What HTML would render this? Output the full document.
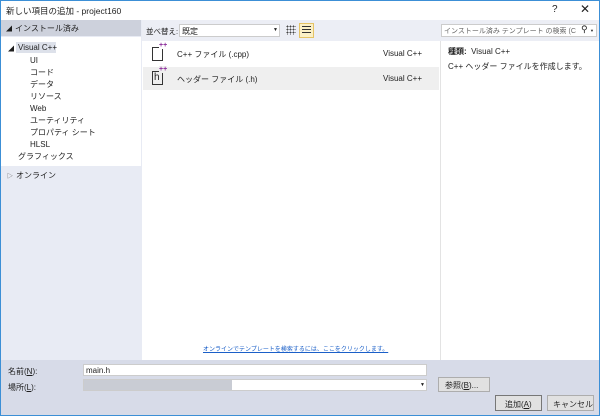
<!DOCTYPE html>
<html><head><meta charset="utf-8"><style>
*{margin:0;padding:0;box-sizing:border-box}
body{width:600px;height:416px;overflow:hidden;font-family:"Liberation Sans","Noto Sans CJK JP",sans-serif;font-size:8px;color:#1e1e1e;background:#fff;position:relative}
.a{position:absolute;white-space:nowrap}
#win{position:absolute;left:0;top:0;width:600px;height:416px;border:1px solid #3c8fd6;}
</style></head><body>
<div class="a" style="left:0;top:0;width:600px;height:20px;background:#fff"></div>
<div class="a" style="left:6px;top:5px;font-size:8.5px">新しい項目の追加 - project160</div>
<div class="a" style="left:552px;top:4px;font-size:10px">?</div>
<div class="a" style="left:580px;top:2px;font-size:12px">✕</div>
<!-- left panel -->
<div class="a" style="left:0;top:20px;width:142px;height:340px;background:#e8ebf4"></div>
<div class="a" style="left:0;top:20px;width:141px;height:16px;background:#cdd1dc"></div>
<div class="a" style="left:6px;top:24px;font-size:6px">◢</div>
<div class="a" style="left:15px;top:23px">インストール済み</div>
<div class="a" style="left:0;top:37px;width:141px;height:129px;background:#fff"></div>
<div class="a" style="left:8px;top:44px;font-size:6px">◢</div>
<div class="a" style="left:16px;top:42px;width:40px;height:11px;background:#dde1ea"></div>
<div class="a" style="left:18px;top:43px">Visual C++</div>
<div class="a" style="left:30px;top:55px;line-height:12px">UI<br>コード<br>データ<br>リソース<br>Web<br>ユーティリティ<br>プロパティ シート<br>HLSL</div>
<div class="a" style="left:18px;top:151px">グラフィックス</div>
<div class="a" style="left:7px;top:171px;font-size:6px;color:#555">▷</div>
<div class="a" style="left:16px;top:170px">オンライン</div>
<!-- toolbar -->
<div class="a" style="left:142px;top:20px;width:458px;height:21px;background:#eceef5"></div>
<div class="a" style="left:146px;top:26px;font-size:7.5px">並べ替え:</div>
<div class="a" style="left:179px;top:24px;width:101px;height:13px;background:#fff;border:1px solid #ccc"></div>
<div class="a" style="left:182px;top:26px">既定</div>
<div class="a" style="left:273px;top:27px;font-size:5px">▼</div>
<div class="a" style="left:286px;top:25px;width:10px;height:10px;background:radial-gradient(circle,#444 0.8px,transparent 1px) 0 0/3px 3px"></div>
<div class="a" style="left:299px;top:23px;width:15px;height:15px;background:#fbf0c6;border:1px solid #e5c365"></div>
<div class="a" style="left:302px;top:26px;width:9px;height:9px;background:repeating-linear-gradient(#333 0 1.2px,transparent 1.2px 3px)"></div>
<div class="a" style="left:441px;top:24px;width:156px;height:13px;background:#fff;border:1px solid #ccc;overflow:hidden"></div>
<div class="a" style="left:444px;top:26px;width:132px;overflow:hidden;color:#666;font-size:7px">インストール済み テンプレート の検索 (Ctrl+E</div>
<div class="a" style="left:581px;top:24px;font-size:9px;transform:scaleX(-1)">⚲</div>
<div class="a" style="left:590px;top:28px;font-size:4px">▼</div>
<!-- list -->
<div class="a" style="left:143px;top:41px;width:297px;height:319px;background:#fff"></div>
<div class="a" style="left:143px;top:67px;width:296px;height:23px;background:#efefef"></div>
<div class="a" style="left:152px;top:47px;width:11px;height:14px;border:1.5px solid #333"></div>
<div class="a" style="left:159px;top:42px;color:#8b2c9a;font-size:7px;font-weight:bold;background:#fff">++</div>
<div class="a" style="left:152px;top:71px;width:11px;height:14px;border:1.5px solid #333"></div>
<div class="a" style="left:154px;top:72px;font-size:10px">h</div>
<div class="a" style="left:159px;top:66px;color:#8b2c9a;font-size:7px;font-weight:bold;background:#efefef">++</div>
<div class="a" style="left:177px;top:49px">C++ ファイル (.cpp)</div>
<div class="a" style="left:177px;top:74px">ヘッダー ファイル (.h)</div>
<div class="a" style="left:383px;top:49px">Visual C++</div>
<div class="a" style="left:383px;top:74px">Visual C++</div>
<div class="a" style="left:203px;top:344px;color:#1a5fc8;text-decoration:underline;font-size:6px">オンラインでテンプレートを検索するには、ここをクリックします。</div>
<!-- right -->
<div class="a" style="left:440px;top:41px;width:1px;height:319px;background:#e3e3e3"></div>
<div class="a" style="left:448px;top:46px"><b>種類:</b>&nbsp; Visual C++</div>
<div class="a" style="left:448px;top:61px">C++ ヘッダー ファイルを作成します。</div>
<!-- bottom -->
<div class="a" style="left:0;top:360px;width:600px;height:56px;background:#d7dbe8"></div>
<div class="a" style="left:8px;top:366px">名前(<u>N</u>):</div>
<div class="a" style="left:83px;top:364px;width:344px;height:12px;background:#fff;border:1px solid #ccc"></div>
<div class="a" style="left:86px;top:366px">main.h</div>
<div class="a" style="left:8px;top:382px">場所(<u>L</u>):</div>
<div class="a" style="left:83px;top:379px;width:344px;height:12px;background:#fff;border:1px solid #ccc"></div>
<div class="a" style="left:84px;top:380px;width:148px;height:10px;background:#c9ccd4"></div>
<div class="a" style="left:420px;top:382px;font-size:5px">▼</div>
<div class="a" style="left:438px;top:377px;width:52px;height:15px;background:#e1e1e1;border:1px solid #adadad"></div>
<div class="a" style="left:445px;top:380px">参照(<u>B</u>)...</div>
<div class="a" style="left:495px;top:395px;width:47px;height:16px;background:#e1e1e1;border:1px solid #777"></div>
<div class="a" style="left:505px;top:399px">追加(<u>A</u>)</div>
<div class="a" style="left:547px;top:395px;width:47px;height:16px;background:#e1e1e1;border:1px solid #adadad"></div>
<div class="a" style="left:553px;top:399px">キャンセル</div>
<div id="win"></div>
</body></html>
